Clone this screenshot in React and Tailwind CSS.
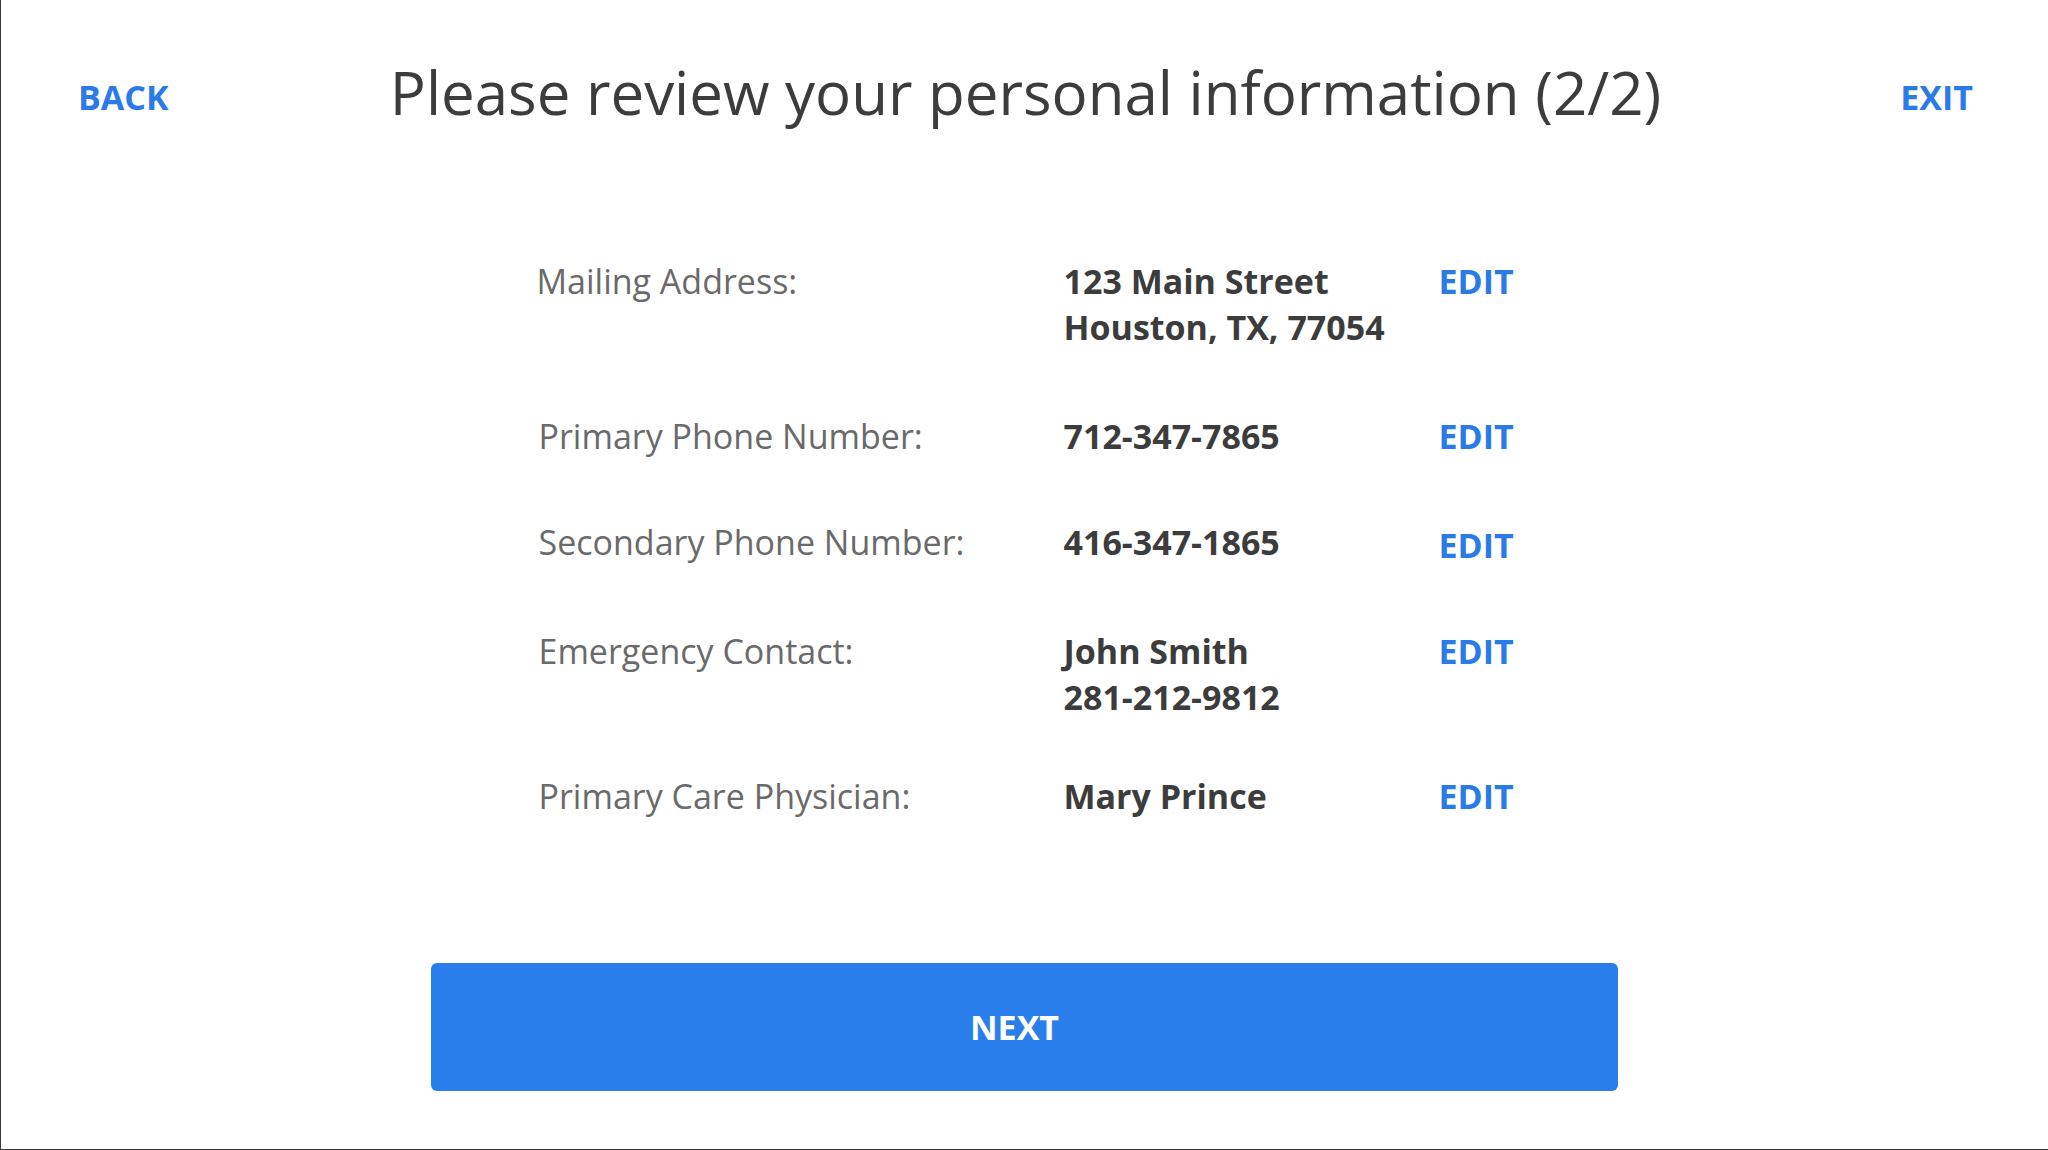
import React from "react";

const ROWS = [
  { label: "Mailing Address:", lines: ["123 Main Street", "Houston, TX, 77054"], gap: "mt-[124px]", labelPad: "pl-0", editPad: "pt-0" },
  { label: "Primary Phone Number:", lines: ["712-347-7865"], gap: "mt-[63px]", labelPad: "pl-[2px]", editPad: "pt-0" },
  { label: "Secondary Phone Number:", lines: ["416-347-1865"], gap: "mt-[60px]", labelPad: "pl-[2px]", editPad: "pt-[3px]" },
  { label: "Emergency Contact:", lines: ["John Smith", "281-212-9812"], gap: "mt-[60px]", labelPad: "pl-[2px]", editPad: "pt-0" },
  { label: "Primary Care Physician:", lines: ["Mary Prince"], gap: "mt-[53px]", labelPad: "pl-[2px]", editPad: "pt-0" },
];

export default function App() {
  return (
    <div
      className="w-full h-[1150px] bg-white border-l border-b border-[#3a3a3a] flex flex-col"
      style={{ fontFamily: '"Open Sans", "Liberation Sans", sans-serif' }}
    >
      {/* header */}
      <div className="grid grid-cols-[1fr_auto_1fr] items-start pt-[50px] pl-[77px] pr-[75px]">
        <button type="button" className="justify-self-start mt-[25px] text-[34px] leading-[45px] font-bold text-[#2a7be8]">
          BACK
        </button>
        <h1 className="text-[60px] leading-[84px] font-normal text-[#3c3c3c]">
          Please review your personal information (2/2)
        </h1>
        <button type="button" className="justify-self-end mt-[25px] text-[34px] leading-[45px] font-bold text-[#2a7be8]">
          EXIT
        </button>
      </div>

      {/* info rows */}
      <div className="w-[976px] mx-auto flex flex-col">
        {ROWS.map((r) => (
          <div key={r.label} className={`grid grid-cols-[527px_375px_auto] text-[34px] leading-[46px] ${r.gap}`}>
            <div className={`text-[#6a6a6a] ${r.labelPad}`}>{r.label}</div>
            <div className="font-bold text-[#3c3c3c]">
              {r.lines.map((l) => (
                <div key={l}>{l}</div>
              ))}
            </div>
            <div className={r.editPad}>
              <button type="button" className="font-bold text-[#2a7be8]">
                EDIT
              </button>
            </div>
          </div>
        ))}
      </div>

      <div className="mt-[144px] flex justify-center">
        <button
          type="button"
          className="w-[1187px] h-[128px] rounded-[6px] bg-[#2a7eec] text-white text-[34px] font-bold pr-[20px]"
        >
          NEXT
        </button>
      </div>
    </div>
  );
}
